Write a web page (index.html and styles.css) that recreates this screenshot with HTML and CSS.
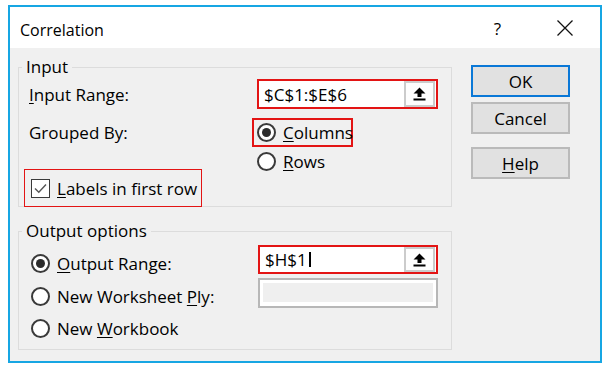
FILE: index.html
```html
<!DOCTYPE html>
<html>
<head>
<meta charset="utf-8">
<title>Correlation</title>
<link rel="stylesheet" href="styles.css">
</head>
<body>
<div class="dialog">
  <div class="titlebar">
    <span class="title">Correlation</span>
    <span class="qmark">?</span>
    <svg class="close" width="16" height="16" viewBox="0 0 16 16"><path d="M0.5 0.5 L15.5 15.5 M15.5 0.5 L0.5 15.5" stroke="#111" stroke-width="1.3" fill="none"/></svg>
  </div>
  <div class="content">
    <div class="groups">
      <fieldset class="group group-input">
        <legend>Input</legend>
        <div class="row row-range">
          <span class="lbl lbl-range"><u>I</u>nput Range:</span>
          <div class="refedit mark">
            <span class="ref-text">$C$1:$E$6</span>
            <span class="ref-btn"><svg width="13" height="14" viewBox="0 0 13 14"><path d="M6.5 0.5 L12.5 6.5 H8.5 V10 H4.5 V6.5 H0.5 Z" fill="#000"/><rect x="0.5" y="11.5" width="12" height="2" fill="#000"/></svg></span>
          </div>
        </div>
        <div class="row row-grouped">
          <span class="lbl lbl-grouped">Grouped By:</span>
          <div class="radios">
            <div class="opt opt-columns mark"><span class="radio on"></span><span><u>C</u>olumns</span></div>
            <div class="opt opt-rows"><span class="radio"></span><span><u>R</u>ows</span></div>
          </div>
        </div>
        <div class="check-row mark-thin">
          <span class="checkbox"><svg width="17" height="17" viewBox="0 0 17 17"><path d="M3 8.5 L6.8 12.3 L14 4.5" stroke="#555" stroke-width="1.4" fill="none"/></svg></span>
          <span><u>L</u>abels in first row</span>
        </div>
      </fieldset>
      <fieldset class="group group-output">
        <legend>Output options</legend>
        <div class="out-grid">
          <div class="out-opts">
            <div class="opt out-opt"><span class="radio on"></span><span><u>O</u>utput Range:</span></div>
            <div class="opt out-opt out-opt-2"><span class="radio"></span><span>New Worksheet <u>P</u>ly:</span></div>
            <div class="opt out-opt out-opt-3"><span class="radio"></span><span>New <u>W</u>orkbook</span></div>
          </div>
          <div class="out-fields">
            <div class="refedit refedit-out mark">
              <span class="ref-text">$H$1<span class="caret"></span></span>
              <span class="ref-btn"><svg width="13" height="14" viewBox="0 0 13 14"><path d="M6.5 0.5 L12.5 6.5 H8.5 V10 H4.5 V6.5 H0.5 Z" fill="#000"/><rect x="0.5" y="11.5" width="12" height="2" fill="#000"/></svg></span>
            </div>
            <div class="disabled-field"><div class="disabled-inner"></div></div>
          </div>
        </div>
      </fieldset>
    </div>
    <div class="buttons">
      <div class="btn btn-default">OK</div>
      <div class="btn btn-cancel">Cancel</div>
      <div class="btn btn-help"><u>H</u>elp</div>
    </div>
  </div>
</div>
</body>
</html>
```

FILE: styles.css
```css
html, body {
  margin: 0;
  padding: 0;
  background: #ffffff;
}
body {
  font-family: "Open Sans", "Noto Sans", sans-serif;
  font-size: 17px;
  color: #000;
}
u {
  text-decoration: underline;
  text-decoration-thickness: 1px;
  text-underline-offset: 2px;
}
.dialog {
  margin: 5px 0 0 8px;
  width: 594px;
  height: 358px;
  box-sizing: border-box;
  border: 2px solid #17a6e3;
  background: #f0f0f0;
  display: flex;
  flex-direction: column;
}
.titlebar {
  height: 41px;
  flex: none;
  background: #ffffff;
  display: flex;
  align-items: flex-start;
  padding: 0 27px 0 10px;
}
.title {
  font-size: 16px;
  line-height: 20px;
  margin-top: 13px;
}
.qmark {
  margin-left: auto;
  font-size: 17px;
  line-height: 20px;
  margin-top: 12px;
}
.close {
  margin-left: 56px;
  margin-top: 13px;
}
.content {
  flex: 1;
  display: flex;
  padding: 9px 0 0 8px;
}
.groups {
  width: 434px;
  display: flex;
  flex-direction: column;
}
.group {
  margin: 0;
  border: 1px solid #dcdcdc;
  padding: 0 0 0 3px;
  width: 434px;
  box-sizing: border-box;
  min-width: 0;
}
.group legend {
  padding: 0 4px;
  line-height: 20px;
}
.row {
  display: flex;
  align-items: center;
}
.row-range {
  margin-top: 2px;
}
.lbl {
  padding-left: 7px;
  box-sizing: border-box;
}
.lbl-range {
  width: 235px;
}
.lbl-grouped {
  width: 230px;
  align-self: flex-start;
  line-height: 29px;
}
.row-grouped {
  margin-top: 9px;
  align-items: flex-start;
}
.mark {
  border: 2px solid #e31414;
}
.mark-thin {
  border: 1px solid #e31414;
}
.refedit {
  width: 181px;
  height: 30px;
  box-sizing: border-box;
  background: #fff;
  display: flex;
  align-items: center;
  padding-right: 1px;
}
.ref-text {
  flex: 1;
  padding-left: 5px;
  display: flex;
  align-items: center;
}
.ref-btn {
  width: 31px;
  height: 26px;
  box-sizing: border-box;
  border: 2px solid #cbcbcb;
  background: #fdfdfd;
  display: flex;
  align-items: center;
  justify-content: center;
}
.radios {
  display: flex;
  flex-direction: column;
}
.opt {
  display: flex;
  align-items: center;
}
.opt-columns {
  height: 29px;
  width: 101px;
  box-sizing: border-box;
  padding-left: 3px;
}
.opt-rows {
  height: 22px;
  margin-top: 3px;
  padding-left: 5px;
}
.radio {
  width: 19px;
  height: 19px;
  box-sizing: border-box;
  border: 2px solid #3a3a3a;
  border-radius: 50%;
  background: #fff;
  margin-right: 7px;
  display: flex;
  align-items: center;
  justify-content: center;
  flex: none;
}
.radio.on::after {
  content: "";
  width: 9px;
  height: 9px;
  border-radius: 50%;
  background: #2b2b2b;
}
.check-row {
  margin: -3px 0 -1px 2px;
  width: 178px;
  height: 38px;
  box-sizing: border-box;
  display: flex;
  align-items: center;
  padding-left: 6px;
}
.checkbox {
  width: 19px;
  height: 19px;
  box-sizing: border-box;
  border: 1.5px solid #3a3a3a;
  background: #fff;
  margin-right: 7px;
  display: flex;
  align-items: center;
  justify-content: center;
}
.group-output {
  margin-top: 14px;
}
.out-grid {
  display: flex;
}
.out-opts {
  width: 236px;
  padding: 11px 0 10px 9px;
  box-sizing: border-box;
  display: flex;
  flex-direction: column;
}
.out-opt {
  height: 22px;
}
.out-opt-2 {
  margin-top: 11px;
}
.out-opt-3 {
  margin-top: 10px;
}
.out-fields {
  display: flex;
  flex-direction: column;
}
.refedit-out {
  margin-top: 4px;
  width: 180px;
  height: 29px;
}
.refedit-out .ref-btn {
  height: 25px;
}
.caret {
  display: inline-block;
  width: 2px;
  height: 15px;
  background: #000;
  margin-left: 2px;
}
.disabled-field {
  margin-top: 4px;
  width: 180px;
  height: 30px;
  box-sizing: border-box;
  border: 2px solid #b7b7b7;
  background: #fff;
  padding: 3px 3px 4px 3px;
}
.disabled-inner {
  width: 100%;
  height: 100%;
  background: #efefef;
}
.buttons {
  margin-left: 19px;
  padding-top: 8px;
  display: flex;
  flex-direction: column;
}
.btn {
  width: 99px;
  height: 32px;
  box-sizing: border-box;
  background: #e1e1e1;
  border: 2px solid #bababa;
  display: flex;
  align-items: center;
  justify-content: center;
}
.btn-default {
  border-color: #0a78d7;
}
.btn-cancel {
  margin-top: 5px;
}
.btn-help {
  margin-top: 13px;
}
```
